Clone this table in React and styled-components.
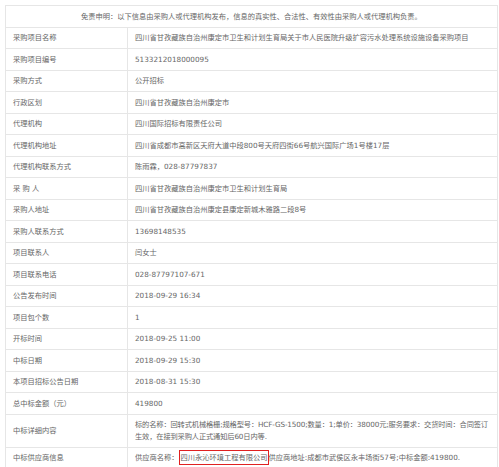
import styled, { createGlobalStyle } from 'styled-components';

const GlobalStyle = createGlobalStyle`
  html, body {
    margin: 0;
    padding: 0;
    background: #fff;
  }
  body {
    font-family: "DejaVu Sans", "Noto Sans CJK SC", sans-serif;
  }
`;

const Page = styled.div`
  padding: 5px 1px 0 5px;
`;

const Table = styled.div`
  border-top: 1px solid #e6e6e6;
  border-left: 1px solid #e6e6e6;
  border-right: 1px solid #e6e6e6;
  color: #666;
  font-size: 7.25px;
`;

const Notice = styled.div`
  border-bottom: 1px solid #e6e6e6;
  min-height: 20.5px;
  line-height: 11.5px;
  padding: 4.5px 7px;
  box-sizing: border-box;
  text-align: center;
`;

const Row = styled.div`
  display: grid;
  grid-template-columns: 122px 1fr;
  border-bottom: 1px solid #e6e6e6;
`;

const Label = styled.div`
  display: flex;
  align-items: center;
  padding: 4.5px 7px;
  line-height: 11.5px;
  border-right: 1px solid #e6e6e6;
`;

const Value = styled.div`
  display: flex;
  align-items: center;
  padding: 4.5px 7px;
  line-height: 11.5px;
  min-height: 11.5px;
  word-break: break-all;
  letter-spacing: ${props => (props.dense ? '-0.15px' : 'normal')};
`;

const Mark = styled.span`
  border: 1px solid #e02020;
  padding: 2px 0 2px 1px;
`;

const rows = [
  ['采购项目名称', '四川省甘孜藏族自治州康定市卫生和计划生育局关于市人民医院升级扩容污水处理系统设施设备采购项目'],
  ['采购项目编号', '5133212018000095'],
  ['采购方式', '公开招标'],
  ['行政区划', '四川省甘孜藏族自治州康定市'],
  ['代理机构', '四川国际招标有限责任公司'],
  ['代理机构地址', '四川省成都市高新区天府大道中段800号天府四街66号航兴国际广场1号楼17层'],
  ['代理机构联系方式', '陈雨霖，028-87797837'],
  ['采 购 人', '四川省甘孜藏族自治州康定市卫生和计划生育局'],
  ['采购人地址', '四川省甘孜藏族自治州康定县康定新城木雅路二段8号'],
  ['采购人联系方式', '13698148535'],
  ['项目联系人', '闫女士'],
  ['项目联系电话', '028-87797107-671'],
  ['公告发布时间', '2018-09-29 16:34'],
  ['项目包个数', '1'],
  ['开标时间', '2018-09-25 11:00'],
  ['中标日期', '2018-09-29 15:30'],
  ['本项目招标公告日期', '2018-08-31 15:30'],
  ['总中标金额（元）', '419800'],
];

export default function App() {
  return (
    <>
      <GlobalStyle />
      <Page>
        <Table>
          <Notice>免责申明：以下信息由采购人或代理机构发布，信息的真实性、合法性、有效性由采购人或代理机构负责。</Notice>
          {rows.map(([label, value]) => (
            <Row key={label}>
              <Label>{label}</Label>
              <Value>{value}</Value>
            </Row>
          ))}
          <Row>
            <Label>中标详细内容</Label>
            <Value dense>
              标的名称：回转式机械格栅;规格型号：HCF-GS-1500;数量：1;单价：38000元;服务要求：交货时间：合同签订生效，在接到采购人正式通知后60日内等.
            </Value>
          </Row>
          <Row>
            <Label>中标供应商信息</Label>
            <Value>
              <span>
                供应商名称：<Mark>四川永沁环境工程有限公司</Mark>供应商地址:成都市武侯区永丰场街57号;中标金额:419800.
              </span>
            </Value>
          </Row>
        </Table>
      </Page>
    </>
  );
}
